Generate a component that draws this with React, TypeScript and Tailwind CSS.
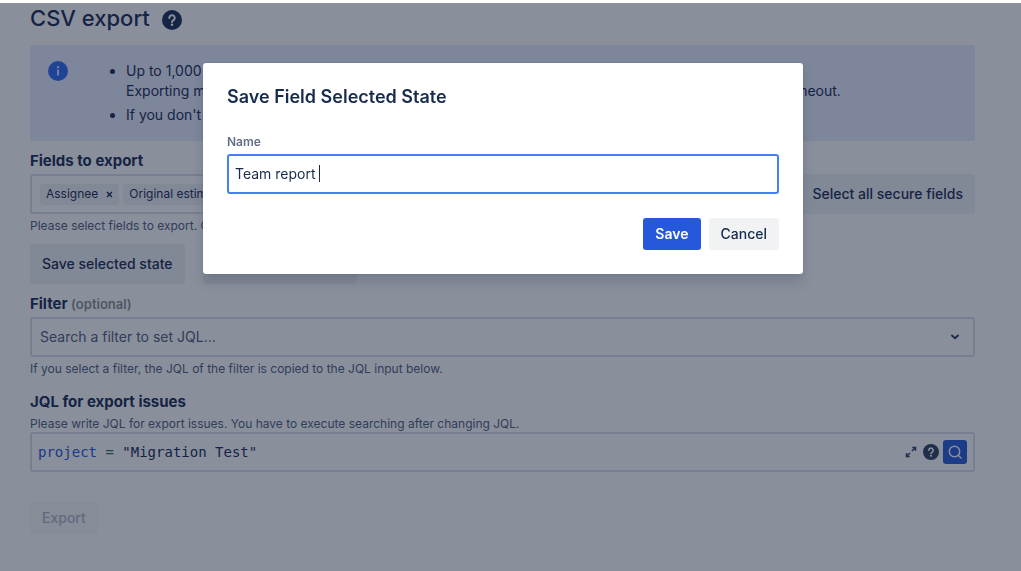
import { useState } from 'react';
import type { ReactNode } from 'react';

const HelpIcon = ({ className }: { className: string }) => (
  <svg viewBox="0 0 20 20" fill="none" className={className} aria-hidden="true">
    <circle cx="10" cy="10" r="10" fill="currentColor" />
    <path d="M7.300 7.900a2.700 2.700 0 1 1 4.400 2.100c-.9.7-1.700 1-1.700 2" stroke="#fff" strokeWidth="2" strokeLinecap="round" />
    <circle cx="10" cy="14.800" r="1.300" fill="#fff" />
  </svg>
);

const InfoIcon = () => (
  <svg viewBox="0 0 20 20" className="size-5 shrink-0" aria-hidden="true">
    <circle cx="10" cy="10" r="10" fill="#2a68f5" />
    <circle cx="10" cy="6.200" r="1.100" fill="#e9ecff" />
    <rect x="9.100" y="8.500" width="1.800" height="6" rx=".6" fill="#e9ecff" />
  </svg>
);

const ChevronIcon = () => (
  <svg viewBox="0 0 10 8" className="h-2 w-2.5" fill="none" aria-hidden="true">
    <path d="M2 2.500 5 5.300 8 2.500" stroke="#2c3e5d" strokeWidth="2" strokeLinecap="round" strokeLinejoin="round" />
  </svg>
);

const ExpandIcon = () => (
  <svg viewBox="0 0 12 12" className="size-3" fill="none" stroke="#2c3e5d" strokeWidth="1.500" aria-hidden="true">
    <path d="M7 5 10.300 1.700M5 7 1.700 10.300" />
    <path d="M7.300 1.500h3.200v3.200M4.700 10.500H1.500V7.300" />
  </svg>
);

const SearchIcon = () => (
  <svg viewBox="0 0 16 16" className="size-4" fill="none" stroke="#fff" strokeWidth="1.500" strokeLinecap="round" aria-hidden="true">
    <circle cx="7.500" cy="7.500" r="5.200" />
    <path d="m11.500 11.500 2.500 2.500" />
  </svg>
);

const FieldTag = ({ children }: { children: ReactNode }) => (
  <span className="flex h-[21px] shrink-0 items-center gap-2 rounded-sm bg-[#f1f2f4] px-1.5 text-xs">
    {children}
    <button type="button" aria-label="Remove" className="flex">
      <svg viewBox="0 0 8 8" className="size-[7px]" stroke="currentColor" strokeWidth="1.600" aria-hidden="true">
        <path d="m1.200 1.200 5.600 5.600M6.800 1.200 1.200 6.800" />
      </svg>
    </button>
  </span>
);

const subtleButton = 'h-10 shrink-0 rounded-[3px] bg-[#f1f2f4] px-3 text-sm font-medium';
const sectionTitle = 'block text-[15px] leading-5 font-bold';
const helpText = 'mt-1 text-xs leading-4 text-[#505a79]';

const ExportPage = () => (
  <main className="border-t-[3px] border-white pt-px pr-[46px] pl-[30px] text-[#172650]">
    <header className="flex items-center gap-3">
      <h1 className="text-[22px] leading-7 font-medium">CSV export</h1>
      <button type="button" aria-label="Help" className="mt-1 flex">
        <HelpIcon className="size-5" />
      </button>
    </header>

    <section className="mt-[13px] flex rounded-[3px] bg-[#e9ecff] px-[18px] py-4 text-sm leading-5">
      <InfoIcon />
      <ul className="ml-7 list-disc space-y-1 overflow-hidden pl-[30px] whitespace-nowrap">
        <li>
          Up to 1,000 issues can be exported at once.
          <br />
          Exporting many issues with a large number of selected fields takes more time and can even stop by timeout.
        </li>
        <li>If you don't select any fields, all fields are exported.</li>
      </ul>
    </section>

    <h2 className={`mt-2.5 ${sectionTitle}`}>Fields to export</h2>
    <div className="mt-[3px] flex gap-2">
      <div className="flex h-10 flex-1 items-center gap-1 overflow-hidden rounded-[3px] border-2 border-[#dbdde9] px-2">
        <FieldTag>Assignee</FieldTag>
        <FieldTag>Original estimate</FieldTag>
      </div>
      <button type="button" className={subtleButton}>Select all secure fields</button>
    </div>
    <p className={helpText}>Please select fields to export. Only these are exported.</p>

    <div className="mt-2.5 flex gap-[18px]">
      <button type="button" className={subtleButton}>Save selected state</button>
      <button type="button" className={subtleButton}>Load selected state</button>
    </div>

    <label htmlFor="filter" className={`mt-2.5 ${sectionTitle}`}>
      Filter <span className="text-[13px] font-semibold text-[#8b8d92]">(optional)</span>
    </label>
    <div className="mt-[3px] flex h-10 items-center rounded-[3px] border-2 border-[#dbdde9] pr-[13px] pl-2">
      <select id="filter" className="flex-1 appearance-none text-sm text-[#505a79]">
        <option>Search a filter to set JQL...</option>
      </select>
      <ChevronIcon />
    </div>
    <p className={helpText}>
      If you select a filter, the JQL of the filter is copied to the JQL input below.
    </p>

    <h2 id="jql" className={`mt-[15px] ${sectionTitle}`}>JQL for export issues</h2>
    <p className={helpText}>
      Please write JQL for export issues. You have to execute searching after changing JQL.
    </p>
    <div className="flex h-10 items-center rounded-[3px] border-2 border-[#dbdde9] px-1.5">
      <div
        role="textbox"
        aria-labelledby="jql"
        contentEditable
        suppressContentEditableWarning
        className="flex-1 font-['DejaVu_Sans_Mono',monospace] text-sm whitespace-pre"
      >
        <span className="text-[#1c50e0]">project</span>
        <span className="text-[#216e5c]"> = </span>
        <span>"Migration Test"</span>
      </div>
      <div className="flex items-center gap-1">
        <button type="button" aria-label="Expand" className="mr-0.5 flex">
          <ExpandIcon />
        </button>
        <button type="button" aria-label="Syntax help" className="flex">
          <HelpIcon className="size-4 text-[#2c3e5d]" />
        </button>
        <button type="button" aria-label="Search" className="flex size-6 items-center justify-center rounded-[3px] bg-[#2558db]">
          <SearchIcon />
        </button>
      </div>
    </div>

    <button type="button" disabled className="mt-[30px] h-8 rounded-[3px] bg-[#f8f8f9] px-3 text-sm font-medium text-[#b0b4c0]">
      Export
    </button>
  </main>
);

const SaveStateDialog = () => {
  const [name, setName] = useState('Team report ');

  return (
    <div className="fixed inset-x-0 top-[3px] bottom-0 flex items-start justify-center bg-[#14203880] pt-[60px] pr-[15px]">
      <form
        role="dialog"
        aria-labelledby="dialog-title"
        className="w-[600px] rounded-[3px] bg-white p-6 shadow-[0_8px_12px_#091e4226,0_0_1px_#091e424f]"
        onSubmit={(event) => event.preventDefault()}
      >
        <h2 id="dialog-title" className="text-lg leading-5 font-semibold">Save Field Selected State</h2>
        <label htmlFor="name" className="mt-[27px] block text-xs leading-4 font-semibold text-[#626f86]">Name</label>
        <div className="relative mt-1">
          <input
            id="name"
            value={name}
            onChange={(event) => setName(event.target.value)}
            className="h-10 w-full rounded-[3px] border-2 border-[#4680f5] px-1.5 pb-0.5 text-sm caret-transparent outline-none"
          />
          {/* text cursor */}
          <span className="absolute top-[11px] left-[92px] h-[17px] w-px bg-[#172b4d]" />
        </div>
        <div className="mt-6 flex justify-end gap-2">
          <button type="submit" className="h-8 rounded-[3px] bg-[#2558db] px-3 text-sm font-semibold text-white">Save</button>
          <button type="button" className="h-8 rounded-[3px] bg-[#f1f2f4] px-3 text-sm font-medium">Cancel</button>
        </div>
      </form>
    </div>
  );
};

export default function App() {
  return (
    <div className="min-h-screen bg-white font-[Inter,'Liberation_Sans',sans-serif] text-[#172b4d]">
      <ExportPage />
      <SaveStateDialog />
    </div>
  );
}
